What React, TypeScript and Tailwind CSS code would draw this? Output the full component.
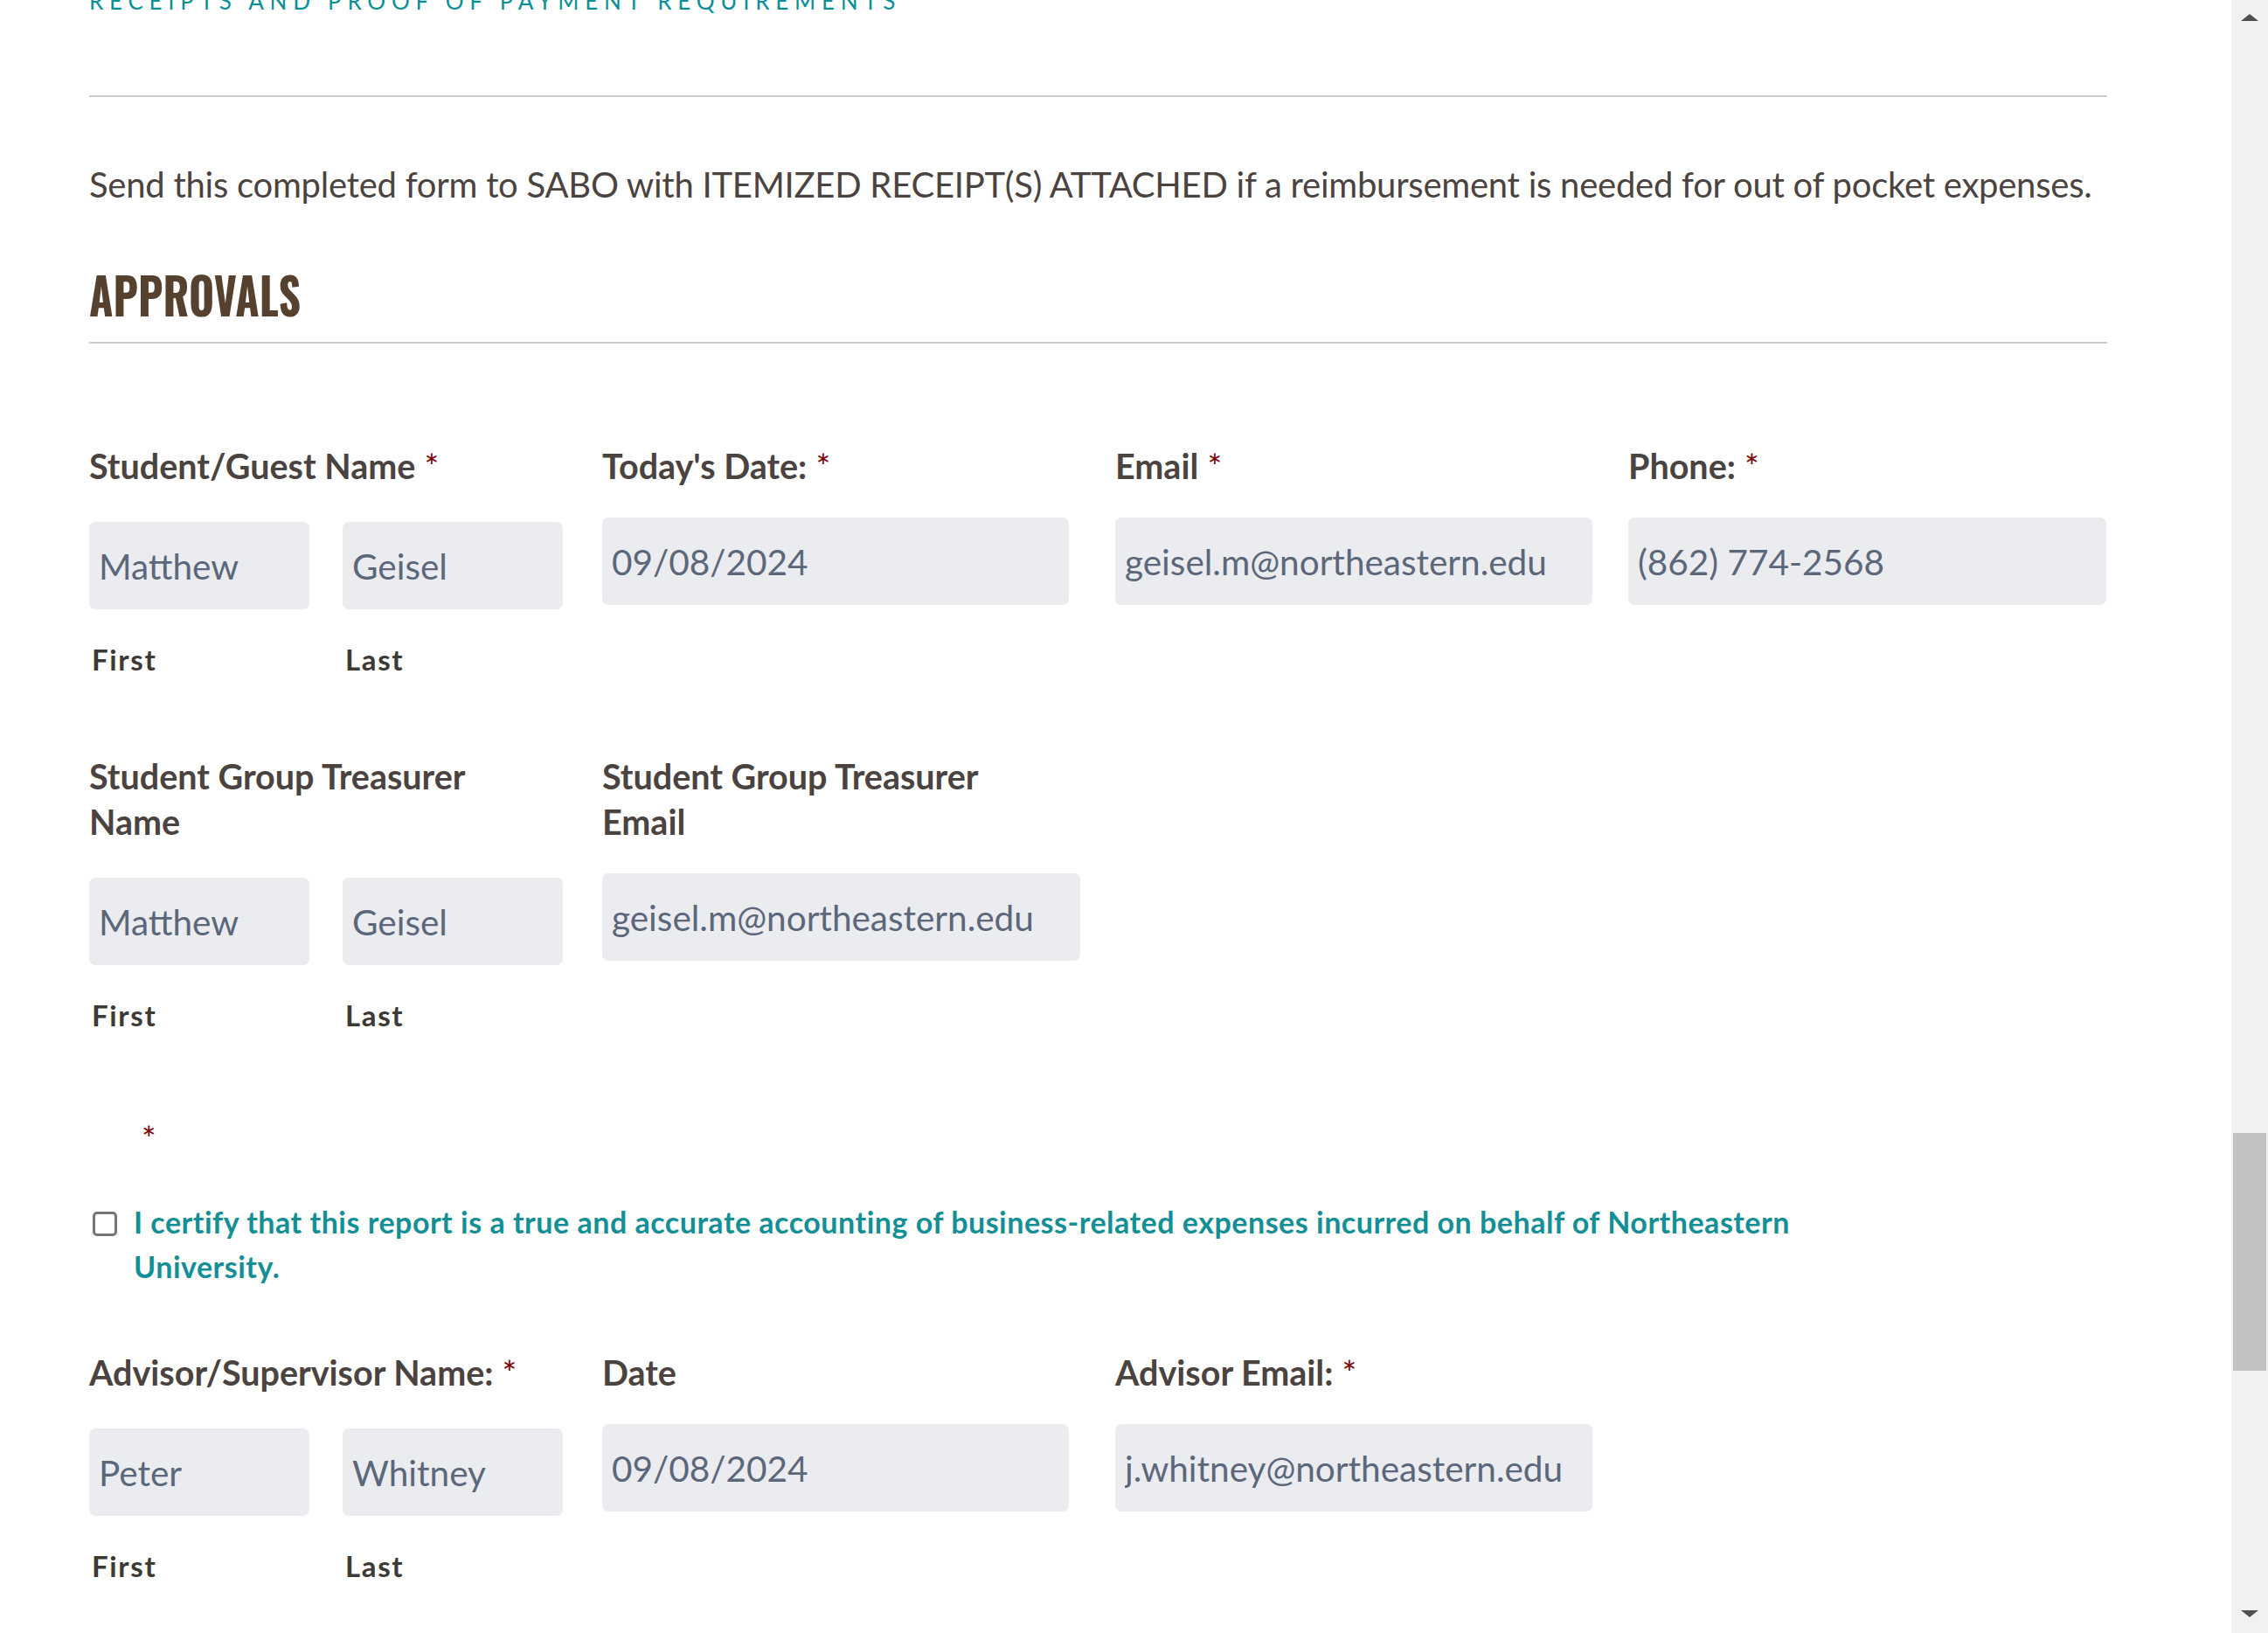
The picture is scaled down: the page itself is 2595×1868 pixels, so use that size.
import React from "react";

const label = "pr-[22px] text-[39.5px] leading-[52px] font-bold text-[#4a4340]";
const inputCls =
  "h-[100px] rounded-[7px] bg-[#ebecf0] px-[11px] text-[40.5px] text-[#5b677a] outline-none font-['Lato',sans-serif]";
const subLabel = "text-[33px] leading-[40px] font-bold tracking-[0.05em] text-[#3d3935]";

function Req() {
  return <span className="font-normal text-[#790000]"> *</span>;
}

function NameField({ title, req, first, last }: { title: string; req?: boolean; first: string; last: string }) {
  return (
    <div className="flex flex-col">
      <div className={label}>
        {title}
        {req && <Req />}
      </div>
      <div className="mt-[38px] flex gap-[38px]">
        <div className="flex w-[252px] flex-col">
          <input readOnly value={first} className={`${inputCls} w-full`} />
          <div className={`${subLabel} mt-[37px] pl-[3px]`}>First</div>
        </div>
        <div className="flex w-[252px] flex-col">
          <input readOnly value={last} className={`${inputCls} w-full`} />
          <div className={`${subLabel} mt-[37px] pl-[3px]`}>Last</div>
        </div>
      </div>
    </div>
  );
}

function Field({ title, req, value, w }: { title: string; req?: boolean; value: string; w: string }) {
  return (
    <div className="flex flex-col">
      <div className={label}>
        {title}
        {req && <Req />}
      </div>
      <input readOnly value={value} className={`${inputCls} mt-[33px] ${w}`} />
    </div>
  );
}

export default function App() {
  return (
    <div className="flex h-[1868px] w-full overflow-hidden bg-white font-['Lato',sans-serif]">
      <div className="flex-1 pl-[102px]">
        <div className="flex w-[2309px] flex-col">
          <div className="mt-[-12px] text-[26px] leading-none uppercase tracking-[0.26em] text-[#0a8f96]">
            Receipts and Proof of Payment Requirements
          </div>
          <div className="mt-[95px] h-[2px] bg-[#cccccc]" />

          <p className="mt-[76px] text-[40px] leading-[48px] tracking-[-0.25px] text-[#4b4340]">
            Send this completed form to SABO with ITEMIZED RECEIPT(S) ATTACHED if a reimbursement is needed for out of pocket expenses.
          </p>

          <h2 className="mt-[73px] origin-left scale-x-[0.875] text-[57px] leading-none font-bold text-[#56412f] font-['Oswald','Liberation_Sans_Narrow','DejaVu_Sans_Condensed',sans-serif]">
            APPROVALS
          </h2>
          <div className="mt-[26px] h-[2px] bg-[#cccccc]" />

          {/* row 1 */}
          <div className="mt-[114px] grid grid-cols-[547px_547px_547px_547px] gap-x-[40px]">
            <NameField title="Student/Guest Name" req first="Matthew" last="Geisel" />
            <Field title="Today's Date:" req value="09/08/2024" w="w-[534px]" />
            <Field title="Email" req value="geisel.m@northeastern.edu" w="w-[546px]" />
            <Field title="Phone:" req value="(862) 774-2568" w="w-full" />
          </div>

          {/* row 2 */}
          <div className="mt-[88px] grid grid-cols-[547px_547px_547px_547px] gap-x-[40px]">
            <NameField title="Student Group Treasurer Name" first="Matthew" last="Geisel" />
            <Field title="Student Group Treasurer Email" value="geisel.m@northeastern.edu" w="w-full" />
          </div>

          <div className="mt-[95px] ml-[60px] text-[39px] leading-[52px] text-[#790000]">*</div>

          <label className="mt-[44px] flex items-start gap-[19px]">
            <input
              type="checkbox"
              className="mt-[14px] ml-[4px] h-[28px] w-[28px] shrink-0 appearance-none rounded-[5px] border-[3px] border-[#767676] bg-white"
            />
            <span className="max-w-[1930px] text-[34px] leading-[51px] font-bold tracking-[0.015em] text-[#138f95]">
              I certify that this report is a true and accurate accounting of business-related expenses incurred on behalf of Northeastern University.
            </span>
          </label>

          {/* row 3 */}
          <div className="mt-[70px] grid grid-cols-[547px_547px_547px_547px] gap-x-[40px]">
            <NameField title="Advisor/Supervisor Name:" req first="Peter" last="Whitney" />
            <Field title="Date" value="09/08/2024" w="w-[534px]" />
            <Field title="Advisor Email:" req value="j.whitney@northeastern.edu" w="w-[546px]" />
          </div>
        </div>
      </div>

      {/* scrollbar */}
      <div className="flex h-full w-[42px] shrink-0 flex-col items-center bg-[#f1f1f1]">
        <svg width="22" height="12" viewBox="0 0 22 12" className="mt-[14px]">
          <polygon points="11,2 21,10 1,10" fill="#505050" />
        </svg>
        <div className="mt-[1270px] h-[272px] w-[38px] bg-[#c1c1c1]" />
        <div className="flex-1" />
        <svg width="22" height="12" viewBox="0 0 22 12" className="mb-[16px]">
          <polygon points="1,2 21,2 11,10" fill="#505050" />
        </svg>
      </div>
    </div>
  );
}
